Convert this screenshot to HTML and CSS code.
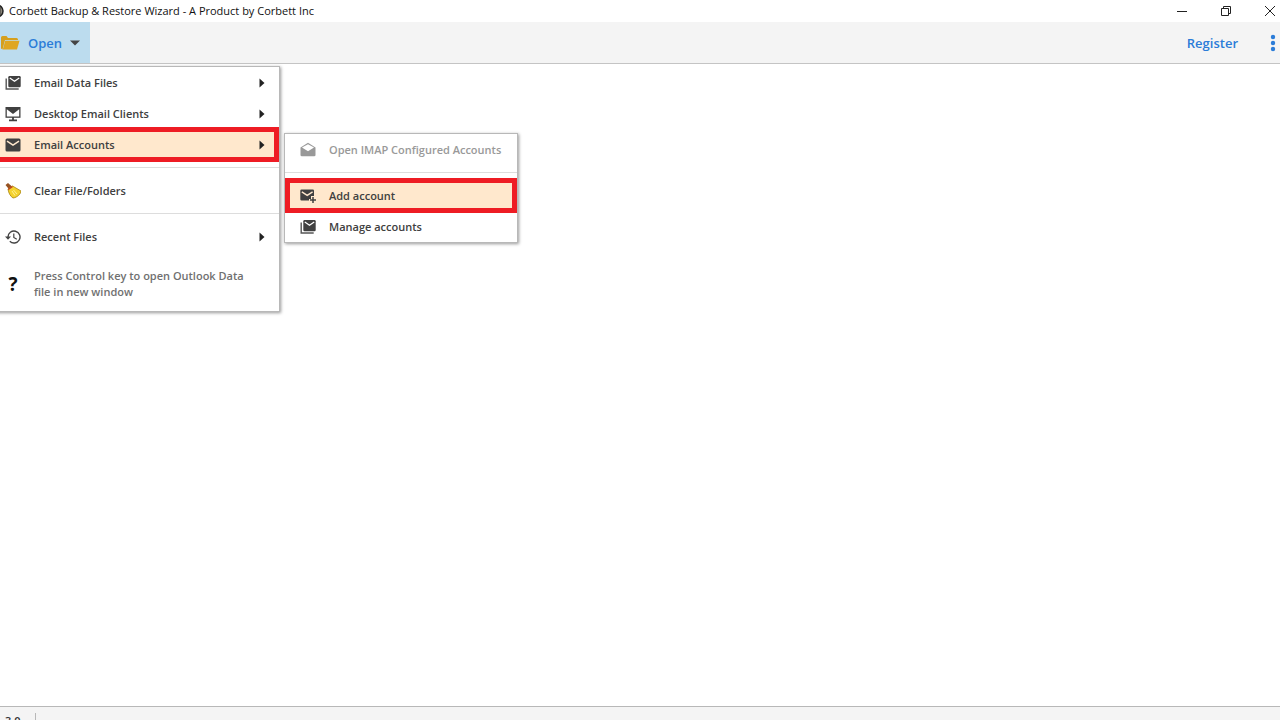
FILE: index.html
```
<!DOCTYPE html>
<html lang="en">
<head>
  <meta charset="UTF-8">
  <meta name="viewport" content="width=device-width, initial-scale=1.0">
  <title>Corbett Backup &amp; Restore Wizard</title>
  <link rel="stylesheet" href="styles.css">
</head>
<body>

<!-- Shared icons -->
<svg class="sprite" width="0" height="0">
  <symbol id="mail" viewBox="0 0 16 16">
    <path d="M2 1.500h12a1.500 1.500 0 0 1 1.500 1.500v10a1.500 1.500 0 0 1-1.500 1.500H2A1.500 1.500 0 0 1 .5 13V3A1.500 1.500 0 0 1 2 1.500z" fill="#404040"/>
    <path d="M2 4.200l6 4 6-4" fill="none" stroke="#ffe8cd" stroke-width="1.500"/>
  </symbol>
  <symbol id="mails" viewBox="0 0 16 16">
    <path d="M4.500 1h10a1.200 1.200 0 0 1 1.200 1.200v8.800a1.200 1.200 0 0 1-1.200 1.200h-10a1.200 1.200 0 0 1-1.200-1.200V2.200A1.200 1.200 0 0 1 4.500 1z" fill="#404040"/>
    <path d="M4.800 3l4.700 3.200L14.200 3" fill="none" stroke="#fff" stroke-width="1.300"/>
    <path d="M1.200 3.500v10.500h12.500" fill="none" stroke="#555" stroke-width="1.400"/>
  </symbol>
  <symbol id="arrow" viewBox="0 0 6 10">
    <path d="M.5 .5L5.500 5 .5 9.500z" fill="#222"/>
  </symbol>
</svg>

<header class="titlebar">
  <svg class="logo" viewBox="0 0 14 14"><circle cx="7" cy="7" r="6" fill="#8b877c" stroke="#222" stroke-width="1.500"/><path d="M7 2v10M10 3v8" stroke="#3b3934"/></svg>
  <span class="title">Corbett Backup &amp; Restore Wizard - A Product by Corbett Inc</span>
  <div class="window-buttons">
    <button aria-label="Minimize"><svg viewBox="0 0 12 12"><path d="M1 6.500h10" stroke="#222"/></svg></button>
    <button aria-label="Restore"><svg viewBox="0 0 12 12"><path d="M1.500 3.500h7v7h-7zM3.500 3.500v-2h7v7h-2" fill="none" stroke="#222"/></svg></button>
    <button aria-label="Close"><svg viewBox="0 0 12 12"><path d="M1 1l10 10M11 1L1 11" stroke="#222"/></svg></button>
  </div>
</header>

<nav class="toolbar">
  <div class="open">
    <button class="open-button">
      <svg class="folder" viewBox="0 0 20 16"><path d="M1 13.500V2.500A1.500 1.500 0 0 1 2.500 1h4l1.500 2h8.500A1.500 1.500 0 0 1 18 4.500V5H5L2.500 14.500z" fill="#d69f1c"/><path d="M5.200 5.800H19.500L17 14.500H2.800z" fill="#dfa621"/></svg>
      <span>Open</span>
      <svg class="caret" viewBox="0 0 10 6"><path d="M0 .5h10L5 5.500z" fill="#444"/></svg>
    </button>

    <!-- Open menu -->
    <ul class="menu main-menu">
      <li><button class="item"><svg class="icon"><use href="#mails"/></svg><span>Email Data Files</span><svg class="arrow"><use href="#arrow"/></svg></button></li>
      <li><button class="item">
        <svg class="icon" viewBox="0 0 16 16"><path d="M.5 1h15v10.800H.5z" fill="#404040"/><path d="M1.800 3.200L8 8l6.200-4.800v7.300H1.800z" fill="#fff"/><path d="M8 11v3M4 14.300h8" stroke="#404040" stroke-width="1.800"/></svg>
        <span>Desktop Email Clients</span><svg class="arrow"><use href="#arrow"/></svg></button></li>
      <li>
        <button class="item marked"><svg class="icon"><use href="#mail"/></svg><span>Email Accounts</span><svg class="arrow"><use href="#arrow"/></svg></button>
        <ul class="menu sub-menu">
          <li><button class="item" disabled>
            <svg class="icon" viewBox="0 0 16 16"><path d="M.5 5.500L8 .8l7.500 4.700V13A1.300 1.300 0 0 1 14.200 14.300H1.800A1.300 1.300 0 0 1 .5 13z" fill="#999"/><path d="M2 5.600L8 2.200l6 3.400-6 3.600z" fill="#fff"/></svg>
            <span>Open IMAP Configured Accounts</span></button></li>
          <li class="separator"></li>
          <li><button class="item marked">
            <svg class="icon" viewBox="0 0 16 16"><path d="M1.500 1.500h11.300A1.200 1.200 0 0 1 14 2.700V8h-3v3H9v1.500H1.500A1.200 1.200 0 0 1 .3 11.300V2.700A1.200 1.200 0 0 1 1.500 1.500z" fill="#404040"/><path d="M1.800 3.800L7.200 7.300l5.400-3.500" fill="none" stroke="#ffe8cd" stroke-width="1.400"/><path d="M13 9v6M10 12h6" stroke="#404040" stroke-width="1.500"/></svg>
            <span>Add account</span></button></li>
          <li><button class="item"><svg class="icon"><use href="#mails"/></svg><span>Manage accounts</span></button></li>
        </ul>
      </li>
      <li class="separator"></li>
      <li><button class="item">
        <svg class="icon" viewBox="0 0 16 16"><path d="M.5 2L3 0l4 3.500L4 6.200z" fill="#965222"/><path d="M3 6l4.500-3L16 8c0 2.500-3.500 6.500-8 7-2.500-1.500-4.500-5-5-9z" fill="#f4d22e" stroke="#a8830e" stroke-width=".8"/><path d="M3.200 6.500l4.300-3" stroke="#c23b22" stroke-width="1.500"/><path d="M7 8l3 4.500M8.500 7l3.500 4" stroke="#fff3a0" stroke-width=".9"/></svg>
        <span>Clear File/Folders</span></button></li>
      <li class="separator"></li>
      <li><button class="item">
        <svg class="icon" viewBox="0 0 16 16"><path d="M3 8a6 6 0 1 1 1.800 4.300" fill="none" stroke="#444" stroke-width="1.400"/><path d="M0 7.500h6L3 10.700z" fill="#444"/><path d="M8.800 4.500v4l3 1.700" fill="none" stroke="#444" stroke-width="1.200"/></svg>
        <span>Recent Files</span><svg class="arrow"><use href="#arrow"/></svg></button></li>
      <li class="hint">
        <span class="question">?</span>
        <p>Press Control key to open Outlook Data file in new window</p>
      </li>
    </ul>
  </div>

  <a class="register" href="#">Register</a>
  <button class="more" aria-label="More"><svg viewBox="0 0 6 18"><circle cx="3" cy="3" r="2.200"/><circle cx="3" cy="9" r="2.200"/><circle cx="3" cy="15" r="2.200"/></svg></button>
</nav>

<main></main>

<footer class="statusbar">
  <span class="version">3.0</span>
</footer>

</body>
</html>
```

FILE: styles.css
```
* {
  box-sizing: border-box;
}

html {
  height: 100%;
  overflow: hidden;
}

/* The status bar runs past the bottom edge of the window */
body {
  display: flex;
  flex-direction: column;
  height: calc(100% + 14px);
  margin: 0;
  background: #fff;
  color: #333;
  font-family: "Open Sans", "Noto Sans", sans-serif;
  font-size: 11px;
}

button {
  border: none;
  padding: 0;
  background: none;
  color: inherit;
  font: inherit;
}

.sprite {
  position: absolute;
}

/* Title bar */
.titlebar {
  display: flex;
  align-items: center;
  height: 22px;
  padding-bottom: 1px;
  color: #111;
}

.logo {
  width: 14px;
  height: 14px;
  margin-left: -10px;
}

.title {
  margin-left: 5px;
}

.window-buttons {
  display: flex;
  gap: 32px;
  height: 20px;
  margin-left: auto;
  margin-right: 4px;
}

.window-buttons svg {
  display: block;
  width: 12px;
  height: 12px;
}

/* Toolbar */
.toolbar {
  display: flex;
  align-items: center;
  height: 42px;
  background: #f4f4f4;
  border-bottom: 1px solid #c4c4c4;
  color: #2b7cd8;
  font-size: 13px;
  font-weight: 600;
}

.open {
  position: relative;
  height: 100%;
}

.open-button {
  display: flex;
  align-items: center;
  width: 90px;
  height: 100%;
  background: #bcdcee;
}

.folder {
  width: 20px;
  height: 16px;
}

.open-button span {
  margin: 0 8px;
}

.caret {
  width: 10px;
  height: 6px;
}

.register {
  margin-left: auto;
  color: inherit;
  text-decoration: none;
}

.more {
  margin-left: 32px;
  margin-right: 4px;
}

.more svg {
  display: block;
  width: 6px;
  height: 18px;
  fill: #2b7cd8;
}

/* Menus */
.menu {
  position: absolute;
  margin: 0;
  padding: 0;
  list-style: none;
  background: #fff;
  border: 1px solid #b8b8b8;
  box-shadow: 1px 1px 3px rgba(0, 0, 0, 0.4);
  color: #404040;
  font-size: 11px;
}

.main-menu {
  top: 44px;
  left: -6px;
  width: 286px;
}

.menu li {
  position: relative;
}

.item {
  position: relative;
  display: flex;
  align-items: center;
  width: 100%;
  height: 31px;
  padding-left: 10px;
  text-align: left;
}

.icon {
  width: 16px;
  height: 16px;
  margin-right: 13px;
}

.arrow {
  width: 6px;
  height: 10px;
  margin-left: auto;
  margin-right: 14px;
}

.item:disabled {
  color: #999;
}

.marked {
  background: #ffe8cd;
}

/* Red frame round the steps to follow */
.marked::after {
  content: "";
  position: absolute;
  inset: -2px 0;
  border: 5px solid #ee1c24;
}

.menu .separator {
  height: 1px;
  margin: 7px 0;
  background: #ddd;
}

.sub-menu {
  top: 4px;
  left: 289px;
  width: 234px;
}

.sub-menu .item {
  padding-left: 15px;
}

.hint {
  display: flex;
  align-items: center;
  padding: 16px 30px 11px 10px;
  color: #707070;
  line-height: 16px;
}

.question {
  flex: none;
  width: 16px;
  margin-right: 13px;
  color: #111;
  font-size: 19px;
  font-weight: 700;
  text-align: center;
}

.hint p {
  margin: 0;
}

main {
  flex: 1;
}

/* Status bar */
.statusbar {
  display: flex;
  align-items: center;
  height: 28px;
  background: #f4f4f4;
  border-top: 1px solid #b8b8b8;
}

.version {
  padding-left: 5px;
  padding-right: 14px;
  border-right: 1px solid #b8b8b8;
  font-weight: 600;
}
```
